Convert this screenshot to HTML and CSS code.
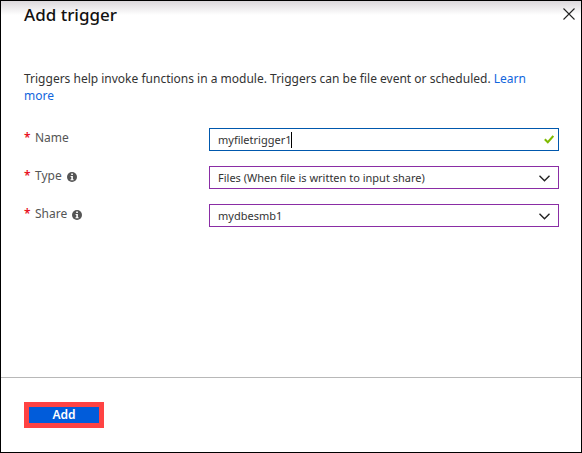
FILE: index.html
```html
<!DOCTYPE html>
<html lang="en">
<head>
<meta charset="utf-8">
<meta name="viewport" content="width=device-width, initial-scale=1">
<title>Add trigger</title>
<link rel="stylesheet" href="styles.css">
</head>
<body>
<form class="panel">
  <header class="panel-header">
    <h1 class="title">Add trigger</h1>
    <button class="close" type="button" aria-label="Close">
      <svg width="12" height="12" viewBox="0 0 12 12" aria-hidden="true"><path d="M0.5 0.5L11.5 11.5M11.5 0.5L0.5 11.5" fill="none" stroke="#222" stroke-width="1.1"/></svg>
    </button>
  </header>
  <main class="content">
    <p class="intro">Triggers help invoke functions in a module. Triggers can be file event or scheduled. <a class="link" href="#">Learn more</a></p>
    <div class="fields">
      <div class="row">
        <div class="label"><span class="required">*</span><label for="name">Name</label></div>
        <div class="control control-active">
          <input class="text" id="name" type="text" value="myfiletrigger1">
          <span class="caret"></span>
          <svg class="check" width="10" height="9" viewBox="0 0 10 9" aria-hidden="true"><path d="M0.8 4.2L3.8 7.2L9.3 1" fill="none" stroke="#7fba00" stroke-width="2"/></svg>
        </div>
      </div>
      <div class="row">
        <div class="label"><span class="required">*</span><label for="type">Type</label>
          <svg class="info" width="10" height="10" viewBox="0 0 10 10" aria-hidden="true"><circle cx="5" cy="5" r="5" fill="#555"/><path d="M4.2 1.6h1.7v1.5H4.2zM3.6 4h2.3v3.2h.7v1H3.5v-1h.8V5h-.7z" fill="#fff"/></svg>
        </div>
        <div class="control">
          <select class="select" id="type"><option>Files (When file is written to input share)</option></select>
          <svg class="chevron" width="11" height="7" viewBox="0 0 11 7" aria-hidden="true"><path d="M0.5 0.7L5.5 5.7L10.5 0.7" fill="none" stroke="#222" stroke-width="1.4"/></svg>
        </div>
      </div>
      <div class="row">
        <div class="label"><span class="required">*</span><label for="share">Share</label>
          <svg class="info" width="10" height="10" viewBox="0 0 10 10" aria-hidden="true"><circle cx="5" cy="5" r="5" fill="#555"/><path d="M4.2 1.6h1.7v1.5H4.2zM3.6 4h2.3v3.2h.7v1H3.5v-1h.8V5h-.7z" fill="#fff"/></svg>
        </div>
        <div class="control">
          <select class="select" id="share"><option>mydbesmb1</option></select>
          <svg class="chevron" width="11" height="7" viewBox="0 0 11 7" aria-hidden="true"><path d="M0.5 0.7L5.5 5.7L10.5 0.7" fill="none" stroke="#222" stroke-width="1.4"/></svg>
        </div>
      </div>
    </div>
  </main>
  <footer class="panel-footer">
    <button class="add" type="button">Add</button>
  </footer>
</form>
</body>
</html>
```
FILE: styles.css
```css
* {
  box-sizing: border-box;
}

body {
  margin: 0;
  font-family: "Segoe UI", "Noto Sans", "Open Sans", sans-serif;
  font-size: 12px;
  line-height: 17px;
  color: #333;
}

.panel {
  display: flex;
  flex-direction: column;
  min-height: 100vh;
  border: 1px solid #000;
  background: linear-gradient(#dcd8dc, #fff 14px) #fff;
}

.panel-header {
  display: flex;
  align-items: flex-start;
  justify-content: space-between;
  padding: 2px 6px 0 23px;
}

.title {
  margin: 0;
  font-size: 17px;
  line-height: 24px;
  font-weight: 500;
  color: #111;
}

.close {
  display: flex;
  margin: 0;
  padding: 5px 0;
  border: 0;
  background: none;
}

.content {
  padding: 43px 22px 24px 23px;
}

.intro {
  margin: 0;
  padding-right: 20px;
}

.link {
  color: #1066dd;
  text-decoration: none;
}

.fields {
  display: grid;
  gap: 15px;
  margin-top: 24px;
}

.row {
  display: grid;
  grid-template-columns: 185px 1fr;
}

.label {
  display: flex;
  align-items: center;
  height: 19px;
  color: #555;
}

.required {
  width: 11px;
  font-weight: 600;
  color: #e81123;
}

.info {
  margin: 3px 0 0 5px;
}

.control {
  position: relative;
  display: flex;
  align-items: center;
  height: 23px;
  border: 1px solid #8a2da5;
  background: #fff;
}

.control-active {
  border-color: #0058ad;
  padding-left: 8px;
}

.text,
.select {
  margin: 0;
  border: 0;
  outline: 0;
  background: none;
  font: inherit;
  font-size: 11px;
  color: #333;
}

.text {
  padding: 0;
  field-sizing: content;
}

.caret {
  width: 1px;
  height: 16px;
  background: #000;
}

.check {
  margin: 0 4px 0 auto;
}

.select {
  width: 100%;
  height: 21px;
  padding: 0 24px 0 8px;
  appearance: none;
}

.chevron {
  position: absolute;
  right: 8px;
  top: 8px;
  pointer-events: none;
}

.panel-footer {
  margin-top: auto;
  padding: 24px 23px;
  border-top: 1px solid #b8b8b8;
}

.add {
  display: block;
  width: 80px;
  height: 26px;
  padding: 0;
  border: 5px solid #ff4343;
  background: #015cda;
  font: inherit;
  font-weight: 600;
  line-height: 16px;
  color: #fff;
}
```
